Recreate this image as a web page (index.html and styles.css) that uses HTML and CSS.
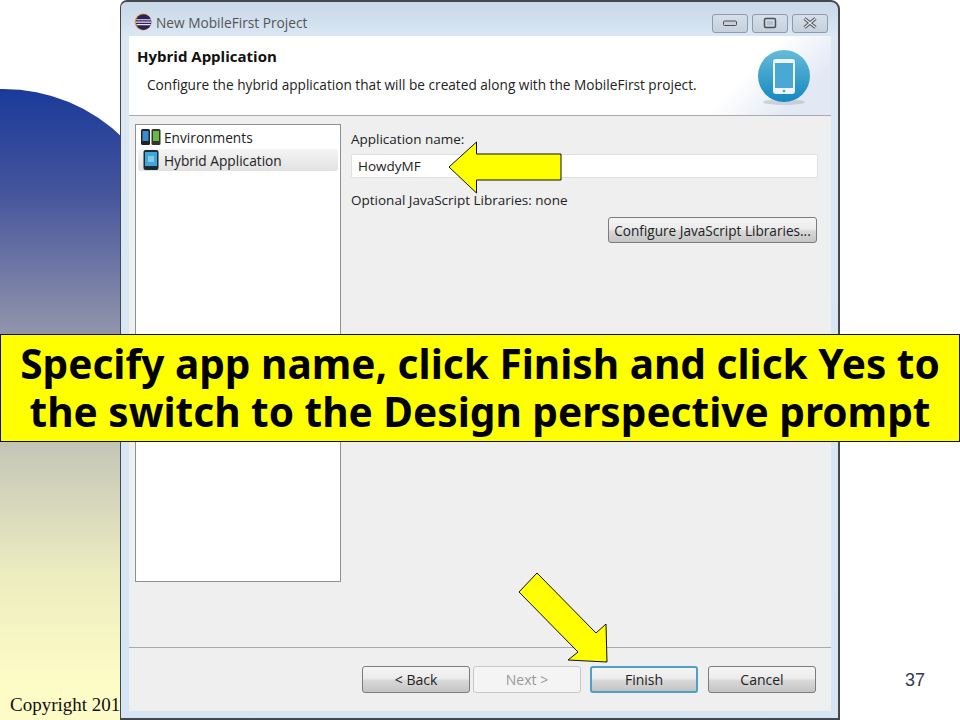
FILE: index.html
```html
<!DOCTYPE html>
<html lang="en">
<head>
<meta charset="utf-8">
<title>New MobileFirst Project</title>
<link rel="stylesheet" href="styles.css">
</head>
<body>
<div class="slide">
  <div class="blob"></div>
  <div class="copyright">Copyright 201</div>
  <div class="pagenum">37</div>

  <section class="dialog">
    <header class="titlebar">
      <svg class="app-icon" width="18" height="18" viewBox="0 0 16 16">
        <circle cx="8" cy="8" r="7.5" fill="#e8a040"/>
        <circle cx="8.5" cy="8" r="7" fill="#2c2258"/>
        <path d="M2 6h13M1.6 8.2h13.8M2.2 10.4h12.6" stroke="#e8e4f4" stroke-width="1.1"/>
      </svg>
      <span class="title">New MobileFirst Project</span>
      <div class="winbtns">
        <div class="winbtn">
          <svg width="14" height="8" viewBox="0 0 14 8"><rect x="0.500" y="2" width="13" height="4.500" rx="1" fill="#c8ced4" stroke="#4a4f56"/></svg>
        </div>
        <div class="winbtn">
          <svg width="14" height="12" viewBox="0 0 14 12"><rect x="1.5" y="1.5" width="11" height="9" rx="1.5" fill="none" stroke="#4a4f56" stroke-width="1.5"/><rect x="4" y="4" width="6" height="4" fill="#b4c2d0"/></svg>
        </div>
        <div class="winbtn">
          <svg width="16" height="12" viewBox="0 0 16 12"><path d="M2.5 1.5l11 9M13.500 1.500l-11 9" stroke="#4a4f56" stroke-width="3.4"/><path d="M2.500 1.500l11 9M13.500 1.500l-11 9" stroke="#e4e8ec" stroke-width="1.500"/></svg>
        </div>
      </div>
    </header>

    <div class="client">
      <div class="banner-head">
        <div class="head-text">
          <h1 class="head-title">Hybrid Application</h1>
          <p class="head-desc">Configure the hybrid application that will be created along with the MobileFirst project.</p>
        </div>
        <svg class="phone-badge" width="56" height="60" viewBox="0 0 56 60">
          <defs>
            <linearGradient id="bg" x1="0" y1="0" x2="0" y2="1">
              <stop offset="0" stop-color="#66bbd8"/>
              <stop offset="1" stop-color="#1488c0"/>
            </linearGradient>
          </defs>
          <ellipse cx="28" cy="53" rx="21" ry="3" fill="#b8bcc4" opacity=".6"/>
          <circle cx="28" cy="27" r="26" fill="url(#bg)"/>
          <rect x="17" y="10" width="22" height="35" rx="3" fill="#eef6fa"/>
          <rect x="19" y="14" width="18" height="25" fill="#4aa8d4"/>
          <circle cx="28" cy="42" r="1.300" fill="#4aa8d4"/>
        </svg>
      </div>

      <div class="main">
        <nav class="tree">
          <div class="tree-item">
            <svg width="20" height="16" viewBox="0 0 20 16">
              <rect x="0" y="0" width="9" height="16" rx="1.500" fill="#222"/>
              <rect x="1.500" y="2" width="6" height="10" fill="#3a8cd0"/>
              <rect x="10.500" y="0" width="9" height="16" rx="1.500" fill="#333"/>
              <rect x="12" y="2" width="6" height="10" fill="#6ab83c"/>
            </svg>
            <span>Environments</span>
          </div>
          <div class="tree-item selected">
            <svg width="16" height="20" viewBox="0 0 16 20">
              <rect x="0.500" y="0" width="15" height="20" rx="2" fill="#1c2a34"/>
              <rect x="2" y="2" width="12" height="14" fill="#3ea8d8"/>
              <rect x="5" y="6" width="6" height="6" fill="#80cce8"/>
            </svg>
            <span>Hybrid Application</span>
          </div>
        </nav>
        <div class="form">
          <label class="field-label">Application name:</label>
          <div class="input">HowdyMF</div>
          <p class="libs">Optional JavaScript Libraries: none</p>
          <div class="libs-row">
            <button class="btn btn-config" type="button">Configure JavaScript Libraries...</button>
          </div>
        </div>
      </div>

      <footer class="actions">
        <button class="btn" type="button">&lt; Back</button>
        <button class="btn btn-disabled" type="button">Next &gt;</button>
        <button class="btn btn-default" type="button">Finish</button>
        <button class="btn" type="button">Cancel</button>
      </footer>
    </div>
  </section>

  <svg class="arrow" width="960" height="720" viewBox="0 0 960 720">
    <polygon points="449,167 476.500,142 476.500,154 561,154 561,180 476.500,180 476.500,193" fill="#ffff00" stroke="#111" stroke-width="1"/>
    <polygon points="537,573 519,592 578,652 568,660 607,662 606,624 596,633" fill="#ffff00" stroke="#111" stroke-width="1"/>
  </svg>

  <div class="callout">Specify app name, click Finish and click Yes to<br>the switch to the Design perspective prompt</div>
</div>
</body>
</html>
```
FILE: styles.css
```css
* { box-sizing: border-box; }
html, body { margin: 0; padding: 0; }
body { width: 960px; height: 720px; overflow: hidden; background: #fff; }

.slide { position: relative; width: 960px; height: 720px; overflow: hidden; background: #fff; }

.blob {
  position: absolute; left: 0; top: 89px; width: 175px; height: 631px;
  border-top-right-radius: 172px;
  background: linear-gradient(180deg, #1a3a9a 0%, #44549c 16%, #8c90aa 37%, #c8c9b8 58%, #ecedc0 77%, #fefcc6 94%, #fefcc6 100%);
}
.copyright {
  position: absolute; left: 10px; top: 695px;
  font: 19px/20px "Liberation Serif", serif; color: #111; white-space: nowrap;
}
.pagenum {
  position: absolute; left: 905px; top: 670px;
  font: 18px/20px "Liberation Sans", sans-serif; color: #2a3a50;
}

.dialog {
  position: absolute; left: 120px; top: 0; width: 720px; height: 720px;
  display: flex; flex-direction: column;
  background: linear-gradient(180deg, #c8d8e8 0, #dbe8f4 36px, #d6e5f4 100%);
  border: 1px solid #44484c; border-width: 2px 2px 2px 1px;
  border-radius: 7px 9px 0 0;
  font-family: "Open Sans", "Noto Sans", sans-serif;
  color: #222;
}

.titlebar { flex: 0 0 34px; display: flex; align-items: center; padding: 0 10px 0 13px; }
.app-icon { flex: none; margin-top: 6px; }
.title { margin: 6px 0 0 4px; font-size: 13.700px; color: #555; }
.winbtns { margin-left: auto; display: flex; gap: 4px; margin-top: 8px; }
.winbtn {
  width: 36px; height: 19px; display: flex; align-items: center; justify-content: center;
  border: 1px solid #8c9cac; border-radius: 3px;
  background: linear-gradient(180deg, #d6e0ea, #c4d0dc);
}

.client { flex: 1; margin: 0 7px 7px 8px; display: flex; flex-direction: column; background: #efefef; min-height: 0; }

.banner-head {
  flex: 0 0 80px; display: flex; justify-content: space-between; align-items: flex-start;
  background: linear-gradient(135deg, #fff 0, #fff 84%, #e2e8f4 94%, #e2e8f4 100%);
  border-bottom: 1px solid #aaa;
}
.head-text { padding: 0 0 0 8px; }
.head-title { margin: 10px 0 0; font-size: 15px; line-height: 20px; font-weight: 700; color: #111; }
.head-desc { margin: 10px 0 0 10px; font-size: 13.650px; line-height: 18px; color: #222; white-space: nowrap; }
.phone-badge { flex: none; margin: 13px 19px 0 0; }

.main { flex: 1; display: flex; min-height: 0; padding: 8px 13px 0 6px; border-bottom: 1px solid #aaa; }

.tree {
  flex: 0 0 206px; height: 458px; background: #fff; border: 1px solid #909090; padding: 1px 2px;
  font-size: 13.700px; color: #222;
}
.tree-item { height: 22px; display: flex; align-items: center; gap: 3px; padding-left: 3px; }
.tree-item.selected {
  gap: 5px; padding-left: 5px;
  background: linear-gradient(180deg, #f4f4f4, #e2e2e2); border-radius: 3px; margin-top: 1px;
}

.form { flex: 1; padding: 6px 0 0 10px; font-size: 13.500px; }
.field-label { display: block; line-height: 18px; }
.input {
  height: 24px; margin-top: 6px; padding-left: 6px; background: #fff;
  border: 1px solid #e0e0e0; border-radius: 2px; line-height: 23px; font-size: 13.500px;
}
.libs { margin: 13px 0 0; line-height: 18px; }
.libs-row { display: flex; justify-content: flex-end; margin-top: 8px; padding-right: 1px; }

.btn {
  width: 108px; height: 27px; padding: 0;
  font-family: inherit; font-size: 14px; color: #222;
  border: 1px solid #7c7c7c; border-radius: 3px;
  background: linear-gradient(180deg, #f4f4f4 0, #ececec 45%, #d8d8d8 55%, #c4c4c4 100%);
}
.btn-config { width: 209px; height: 26px; font-size: 13.600px; }
.btn-disabled { color: #999; border-color: #c8c8c8; background: #f4f4f4; }
.btn-default { border: 2px solid #4fa0c8; }

.actions { flex: 0 0 63px; display: flex; align-items: flex-start; padding: 18px 14px 0 233px; gap: 3px; }
.actions .btn-default { margin-left: 6px; }
.actions .btn-default + .btn { margin-left: 7px; }

.arrow { position: absolute; left: 0; top: 0; pointer-events: none; }

.callout {
  position: absolute; left: 0; top: 334px; width: 960px; height: 108px;
  background: #ffff00; border: 1px solid #111;
  text-align: center; white-space: nowrap;
  font: 700 40.600px/48px "Noto Sans", sans-serif; color: #000;
  padding-top: 5px;
}
```
